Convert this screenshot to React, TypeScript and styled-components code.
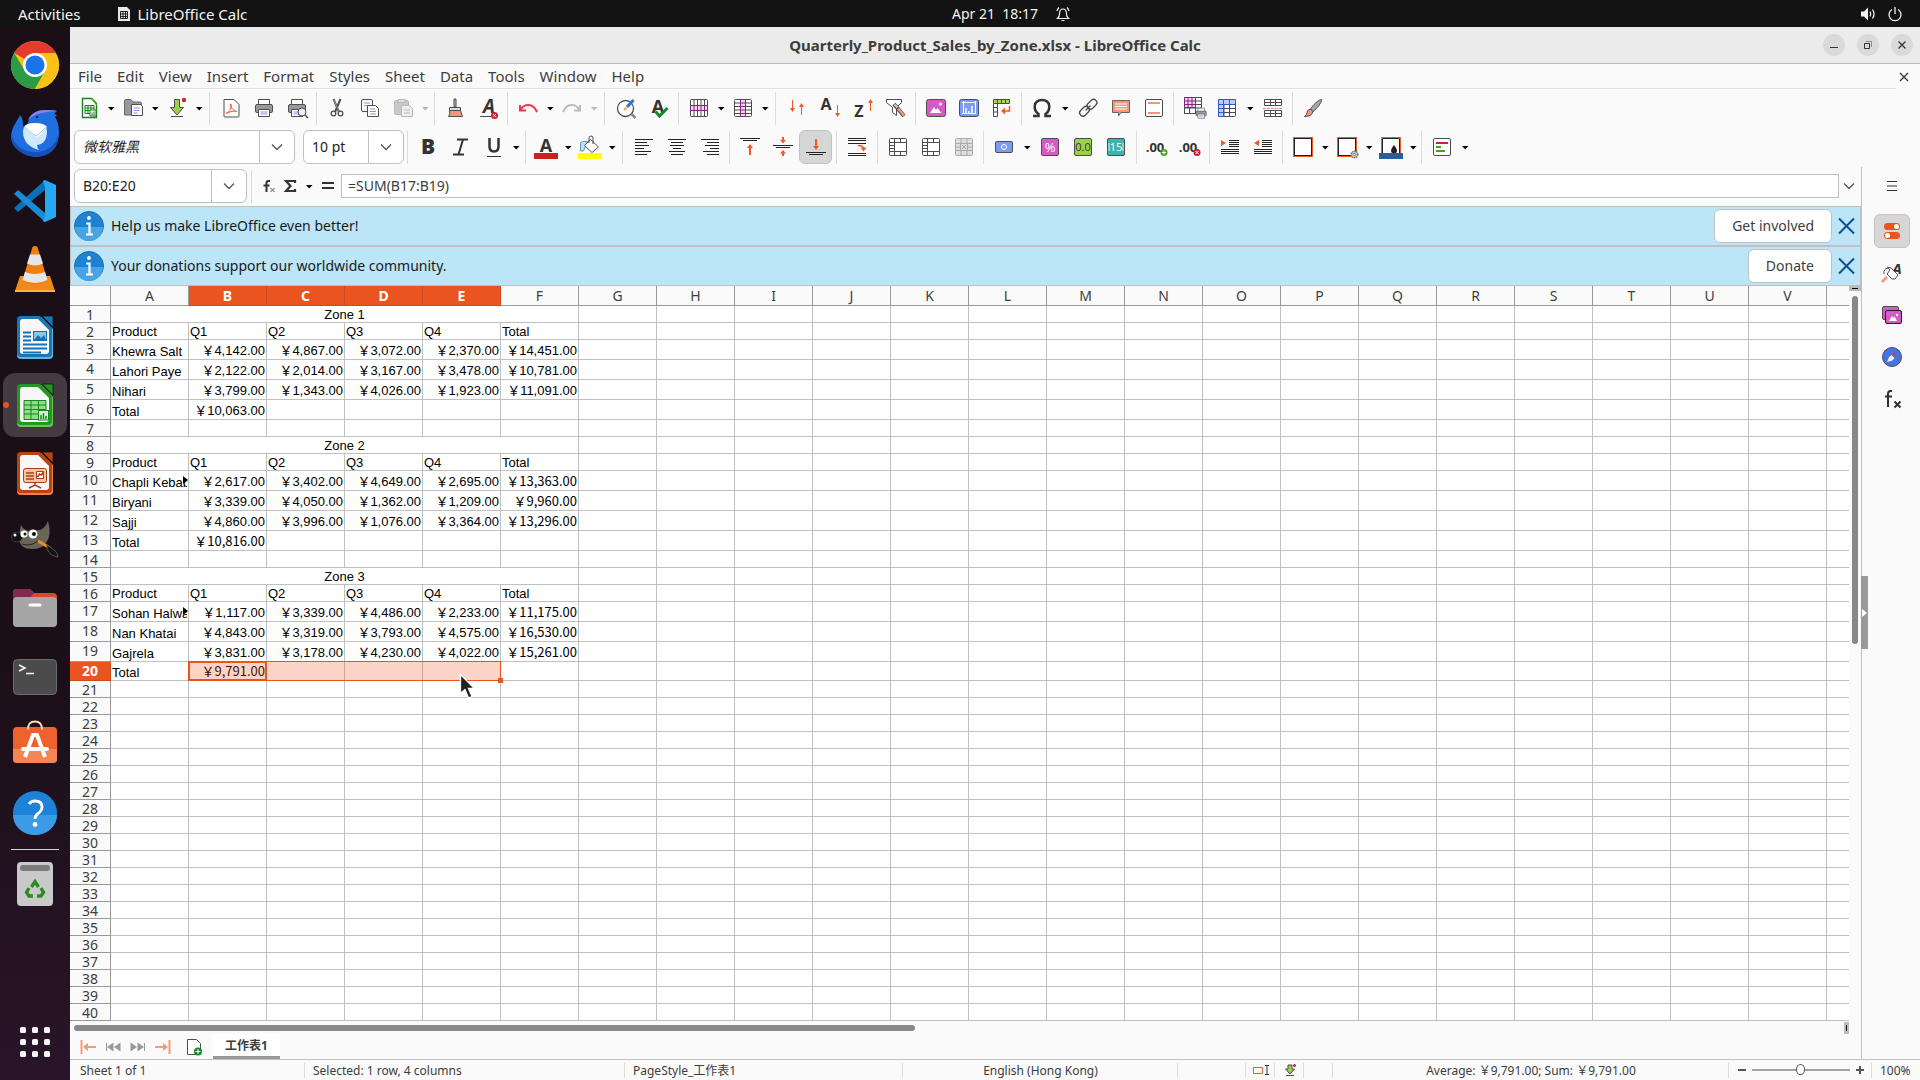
import React from "react";
import styled, { createGlobalStyle, css } from "styled-components";

const ui = `"Noto Sans", "Noto Sans CJK SC", sans-serif`;
const accent = "#e95420";
const line = "#c0c0c0";
const headLine = "#999999";

const Global = createGlobalStyle`
  *, *::before, *::after { box-sizing: border-box; }
  body { margin: 0; overflow: hidden; background: #fafafa; font-family: ${ui}; font-size: 14px; color: #3d3d3d; }
  button, input { font: inherit; color: inherit; margin: 0; padding: 0; border: 0; background: none; }
  svg { display: block; flex: none; overflow: visible; }
`;

const Desktop = styled.div`
  display: flex;
  flex-direction: column;
  height: 100vh;
`;

const TopBar = styled.header`
  display: grid;
  grid-template-columns: 1fr auto 1fr;
  align-items: center;
  height: 27px;
  flex: none;
  background: #131313;
  color: #f2f2f2;
`;
const TopSide = styled.div<{ $end?: boolean }>`
  display: flex;
  align-items: center;
  gap: 8px;
  padding: 0 18px;
  font-size: 15px;
  justify-content: ${(p) => (p.$end ? "flex-end" : "flex-start")};
`;
const TopButton = styled.button`
  display: flex;
  align-items: center;
  gap: 12px;
  line-height: 20px;
  white-space: pre;
`;
const AppButton = styled(TopButton)`
  gap: 7px;
  margin-left: 28px;
`;
const Clock = styled(TopButton)`
  padding-left: 102px;
  gap: 18px;
`;

const Body = styled.div`
  display: flex;
  flex: 1;
  min-height: 0;
`;

const Dock = styled.nav`
  display: flex;
  flex-direction: column;
  align-items: center;
  gap: 4px;
  width: 70px;
  flex: none;
  padding: 6px 0;
  background: linear-gradient(#1b0f17 60%, #29152a);
`;
const DockItem = styled.button<{ $active?: boolean }>`
  display: flex;
  align-items: center;
  justify-content: center;
  position: relative;
  width: 64px;
  height: 64px;
  flex: none;
  border-radius: 12px;
  background: ${(p) => (p.$active ? "#443a41" : "none")};
`;
const RunDot = styled.span`
  position: absolute;
  left: 0;
  top: 29px;
  width: 6px;
  height: 6px;
  border-radius: 3px;
  background: ${accent};
`;
const DockRule = styled.div`
  width: 48px;
  height: 1px;
  flex: none;
  background: #d8d4d6;
`;
const DockSpace = styled.div`
  flex: 1;
`;

const Win = styled.main`
  display: flex;
  flex-direction: column;
  flex: 1;
  min-width: 0;
  background: #fafafa;
`;
const TitleBar = styled.div`
  display: grid;
  grid-template-columns: 1fr auto 1fr;
  align-items: center;
  height: 37px;
  flex: none;
  background: #ebebeb;
  border-bottom: 1px solid #bdbdbd;
`;
const Title = styled.h1`
  grid-column: 2;
  margin: 0;
  font-size: 15px;
  font-weight: 700;
`;
const WinButtons = styled.div`
  display: flex;
  justify-content: flex-end;
  gap: 12px;
  padding-right: 7px;
`;
const WinButton = styled.button`
  display: flex;
  align-items: center;
  justify-content: center;
  width: 22px;
  height: 22px;
  border-radius: 50%;
  background: #dadada;
`;

const MenuRow = styled.div`
  display: flex;
  align-items: stretch;
  height: 25px;
  flex: none;
`;
const MenuBar = styled.nav`
  display: flex;
  flex: 1;
  padding-left: 1px;
  border-bottom: 1px solid #dfdfdf;
`;
const MenuItem = styled.button`
  padding: 0 8px 0 7px;
  font-size: 15px;
  line-height: 24px;
`;
const CloseDoc = styled.button`
  display: flex;
  align-items: center;
  padding: 0 11px 0 3px;
`;

const Toolbar = styled.div<{ $format?: boolean }>`
  display: flex;
  align-items: center;
  height: ${(p) => (p.$format ? 40 : 38)}px;
  flex: none;
  padding-left: ${(p) => (p.$format ? 4 : 2)}px;
`;
const Tool = styled.button<{ $on?: boolean }>`
  display: flex;
  align-items: center;
  justify-content: center;
  width: 33px;
  height: 34px;
  flex: none;
  border-radius: 6px;
  ${(p) => p.$on && css`background: #d6d6d6; border: 1px solid #c2c2c2;`}
`;
const ArrowButton = styled.button<{ $wide?: boolean }>`
  display: flex;
  align-items: center;
  justify-content: center;
  width: ${(p) => (p.$wide ? 13 : 11)}px;
  height: 34px;
  flex: none;
`;
const Divider = styled.span<{ $w: number }>`
  display: flex;
  justify-content: center;
  width: ${(p) => p.$w}px;
  flex: none;
  &::before { content: ""; width: 1px; height: 33px; background: #dcdcdc; }
`;

const Combo = styled.div<{ $w: number; $drop: number }>`
  display: grid;
  grid-template-columns: 1fr ${(p) => p.$drop}px;
  width: ${(p) => p.$w}px;
  height: 34px;
  flex: none;
  background: #fff;
  border: 1px solid ${line};
  border-radius: 6px;
  & + & { margin-left: 8px; }
`;
const ComboInput = styled.input<{ $italic?: boolean }>`
  min-width: 0;
  width: 100%;
  padding: 0 0 2px 8px;
  color: #1c1c1c;
  outline: 0;
  font-style: ${(p) => (p.$italic ? "italic" : "normal")};
`;
const ComboDrop = styled.button`
  display: flex;
  align-items: center;
  justify-content: center;
  border-left: 1px solid ${line};
`;

const Work = styled.div`
  display: flex;
  flex: 1;
  min-height: 0;
`;
const Doc = styled.div`
  display: flex;
  flex-direction: column;
  flex: 1;
  min-width: 0;
`;
const FormulaBar = styled.div`
  display: flex;
  align-items: center;
  height: 39px;
  flex: none;
  padding: 0 0 1px 4px;
`;
const FormulaTools = styled.div`
  display: flex;
  align-items: center;
  width: 86px;
  padding-left: 7px;
`;
const FormulaTool = styled.button<{ $w: number }>`
  display: flex;
  justify-content: center;
  width: ${(p) => p.$w}px;
`;
const FormulaInput = styled.input`
  flex: 1;
  min-width: 0;
  height: 24px;
  padding: 0 0 1px 6px;
  background: #fff;
  border: 1px solid ${line};
  outline: 0;
`;
const Expand = styled.button`
  display: flex;
  justify-content: center;
  width: 22px;
  padding-right: 3px;
`;

const InfoBar = styled.section`
  display: flex;
  align-items: center;
  height: 40px;
  flex: none;
  padding-left: 3px;
  background: #bce5f7;
  border: 1px solid ${line};
  color: #1a1a1a;
`;
const InfoText = styled.p`
  flex: 1;
  margin: 0 0 0 7px;
  padding-bottom: 2px;
`;
const InfoAction = styled.button`
  height: 34px;
  padding: 0 17px 2px;
  background: #fff;
  border: 1px solid ${line};
  border-radius: 6px;
  color: #3d3d3d;
`;
const InfoClose = styled.button`
  display: flex;
  justify-content: center;
  width: 28px;
`;

const SheetArea = styled.div`
  display: flex;
  flex: 1;
  min-height: 0;
`;
const SheetView = styled.div`
  flex: 1;
  min-width: 0;
  overflow: hidden;
  background: #fff;
`;
const Table = styled.table`
  table-layout: fixed;
  width: 1835px;
  border-collapse: separate;
  border-spacing: 0;
`;
const RowCol = styled.col`
  width: 41px;
`;
const DataCol = styled.col`
  width: 78px;
`;
const Head = styled.th<{ $on?: boolean }>`
  height: 20px;
  padding: 0;
  line-height: 18px;
  font-size: 14px;
  font-weight: ${(p) => (p.$on ? 700 : 400)};
  color: ${(p) => (p.$on ? "#fff" : "#3d3d3d")};
  background: ${(p) => (p.$on ? accent : "#fafafa")};
  border-right: 1px solid ${(p) => (p.$on ? "#cc4a1c" : headLine)};
  border-bottom: 1px solid ${(p) => (p.$on ? "#cc4a1c" : headLine)};
`;
const RowHead = styled(Head)<{ $h: number }>`
  height: ${(p) => p.$h}px;
  padding-top: 2px;
  line-height: 14px;
  vertical-align: top;
`;
const Cell = styled.td<{ $align?: "right" | "center"; $cjk?: boolean }>`
  position: relative;
  padding: 0 1px ${(p) => (p.$align === "right" ? (p.$cjk ? 2 : 1) : 0)}px 1px;
  border-right: 1px solid ${line};
  border-bottom: 1px solid ${line};
  vertical-align: bottom;
  text-align: ${(p) => p.$align ?? "left"};
  font-family: ${(p) => (p.$cjk ? `"Noto Sans CJK SC", sans-serif` : `"Liberation Sans", "Noto Sans CJK SC", sans-serif`)};
  font-size: 13px;
  line-height: 15px;
  color: #000;
  white-space: nowrap;
`;
const Clip = styled.div`
  overflow: hidden;
`;
const MoreMark = styled.svg`
  position: absolute;
  right: 0;
  bottom: 6px;
`;
const Selection = styled.div`
  position: absolute;
  z-index: 1;
  left: -1px;
  top: -1px;
  width: 313px;
  height: 20px;
  background: rgba(233, 84, 32, 0.25);
  border: 1px solid ${accent};
  &::before {
    content: "";
    position: absolute;
    left: -1px;
    top: -1px;
    width: 79px;
    height: 20px;
    border: 2px solid ${accent};
  }
  &::after {
    content: "";
    position: absolute;
    right: -3px;
    bottom: -3px;
    width: 5px;
    height: 5px;
    background: ${accent};
  }
`;
const Pointer = styled.svg`
  position: absolute;
  z-index: 2;
  left: 36px;
  top: 11px;
`;

const VScroll = styled.div`
  display: flex;
  flex-direction: column;
  align-items: center;
  width: 12px;
  flex: none;
`;
const SplitV = styled.div`
  display: flex;
  align-items: center;
  justify-content: center;
  width: 12px;
  height: 5px;
  background: #bcbcbc;
  &::before { content: ""; width: 6px; height: 1px; background: #000; }
`;
const VThumb = styled.div`
  width: 6px;
  height: 348px;
  margin-top: 5px;
  border-radius: 3px;
  background: #888;
`;
const HScroll = styled.div`
  display: grid;
  grid-template-columns: 9fr 10fr;
  align-items: center;
  height: 13px;
  flex: none;
  padding: 0 12px 0 4px;
`;
const HThumb = styled.div`
  height: 6px;
  border-radius: 3px;
  background: #888;
`;
const SplitH = styled.div`
  display: flex;
  align-items: center;
  justify-content: center;
  justify-self: end;
  width: 5px;
  height: 12px;
  background: #bcbcbc;
  &::before { content: ""; width: 1px; height: 6px; background: #000; }
`;
const Tabs = styled.div`
  display: flex;
  align-items: center;
  height: 25px;
  flex: none;
  padding-left: 5px;
`;
const TabNav = styled.button<{ $w?: number }>`
  display: flex;
  justify-content: center;
  width: ${(p) => p.$w ?? 25}px;
`;
const Tab = styled.button`
  height: 25px;
  padding: 2px 12px 0;
  background: #fff;
  border-bottom: 3px solid #999;
  font-size: 12px;
  font-weight: 700;
  line-height: 20px;
`;

const Sidebar = styled.aside`
  position: relative;
  display: flex;
  flex-direction: column;
  gap: 8px;
  width: 59px;
  flex: none;
  padding: 2px 0 0 12px;
  border-left: 1px solid ${line};
`;
const SideButton = styled.button<{ $on?: boolean }>`
  display: flex;
  align-items: center;
  justify-content: center;
  width: 36px;
  height: 34px;
  border-radius: 6px;
  ${(p) => p.$on && css`background: #d6d6d6; border: 1px solid #c2c2c2;`}
  &:first-of-type { margin-bottom: 3px; }
`;
const SideHandle = styled.button`
  position: absolute;
  left: -1px;
  top: 409px;
  display: flex;
  align-items: center;
  width: 7px;
  height: 73px;
  background: #999;
`;

const StatusBar = styled.footer`
  display: flex;
  align-items: center;
  height: 21px;
  flex: none;
  border-top: 1px solid ${line};
  font-size: 12px;
`;
const Status = styled.div<{ $w?: number; $center?: boolean }>`
  display: flex;
  align-items: center;
  justify-content: ${(p) => (p.$center ? "center" : "flex-start")};
  ${(p) => (p.$w ? css`width: ${p.$w}px; flex: none;` : css`flex: 1;`)}
  height: 15px;
  padding-left: ${(p) => (p.$center ? 1 : 8)}px;
  gap: 6px;
  white-space: nowrap;
  &:first-child { padding-left: 10px; }
  & + & { border-left: 1px solid #dcdcdc; }
`;
const Range = styled.input`
  appearance: none;
  width: 98px;
  height: 12px;
  &::-webkit-slider-runnable-track {
    height: 2px;
    background: #a0a0a0;
  }
  &::-webkit-slider-thumb {
    appearance: none;
    width: 9px;
    height: 11px;
    margin-top: -5px;
    border: 1px solid #555;
    border-radius: 50%;
    background: #fff;
  }
`;
const ZoomLabel = styled.label`
  display: flex;
`;
const Hidden = styled.span`
  position: absolute;
  width: 1px;
  height: 1px;
  overflow: hidden;
  clip-path: inset(50%);
`;

/* ---------- drawings ---------- */

const Svg = ({ s = 24, w, h, children }: { s?: number; w?: number; h?: number; children: React.ReactNode }) => (
  <svg width={w ?? s} height={h ?? s} viewBox={`0 0 ${w ?? s} ${h ?? s}`} fill="none" aria-hidden="true">
    {children}
  </svg>
);
const G = "#4d4d4d";
const R = "#ed5b27";

const Arrow = ({ dim }: { dim?: boolean }) => (
  <Svg w={8} h={6}>
    <path d="M1 2h6.500L4.200 5.500z" fill={dim ? "#b8b8b8" : "#000"} />
  </Svg>
);
const Chevron = () => (
  <Svg w={12} h={8}>
    <path d="M1 1.500l5 5 5-5" stroke="#555" strokeWidth="1.300" />
  </Svg>
);
const Letter = ({ t, x = 12, y = 18, size = 18, italic, fill = "#333", weight = 700 }: { t: string; x?: number; y?: number; size?: number; italic?: boolean; fill?: string; weight?: number }) => (
  <text x={x} y={y} textAnchor="middle" fontFamily="Open Sans, sans-serif" fontWeight={weight} fontSize={size} fontStyle={italic ? "italic" : "normal"} fill={fill}>
    {t}
  </text>
);
const Printer = ({ x = 0, y = 0, k = 1 }: { x?: number; y?: number; k?: number }) => (
  <g transform={`translate(${x} ${y}) scale(${k})`}>
    <path d="M6.500 9V3.500h11V9" fill="#fff" stroke={G} />
    <rect x="3.500" y="8.500" width="17" height="8" rx="1.500" fill="#999" stroke={G} />
    <path d="M6.500 13.500h11v7h-11z" fill="#fff" stroke={G} />
    <path d="M8.500 16h7M8.500 18h7" stroke="#8d8df0" />
  </g>
);
const MergeGrid = () => (
  <Svg>
    <rect x="3.500" y="3.500" width="17" height="17" rx="1" fill="#fff" stroke={G} />
    <path d="M8.500 3.500v17M8.500 7.500h12M8.500 16.500h12M3.500 7.500h5M3.500 10.500h5M3.500 13.500h5M3.500 16.500h5M14.500 3.500v4M14.500 16.500v4" stroke={G} />
  </Svg>
);

const icons: Record<string, React.ReactNode> = {
  new: (
    <Svg>
      <path d="M5.500 2.500h9l5 5v14h-14z" fill="#fff" stroke="#18811c" strokeWidth="1.400" />
      <path d="M13.500 2h1.500l5 5v2h-1z" fill="#43a31f" />
      <path d="M8 9.500h9v8H8zM8 12h9M8 14.500h9M11 9.500v8M14 9.500v8" stroke="#18811c" />
      <path d="M13 14h6v6h-6z" fill="#fff" stroke="#18811c" />
      <path d="M15 19.500v-3M17 19.500v-4" stroke="#18811c" />
    </Svg>
  ),
  open: (
    <Svg>
      <path d="M3.500 19V5q0-1.500 1.500-1.500h5l2 2.500h7q1.500 0 1.500 1.500V19z" fill="#999" stroke="#666" />
      <path d="M10.500 8.500h9l2 2v9h-11z" fill="#fff" stroke={G} />
      <path d="M12.500 12h6M12.500 14.500h6M12.500 17h4" stroke="#8d8df0" />
    </Svg>
  ),
  save: (
    <Svg>
      <path d="M9.500 3.500h5v8h4L12 19l-6.500-7.500h4z" fill="#9bd14a" stroke={G} />
      <path d="M6 20.500h12" stroke={G} />
      <circle cx="19" cy="4" r="2.200" fill="#c9213a" />
    </Svg>
  ),
  pdf: (
    <Svg>
      <path d="M5 3.500h10l5 5V20q0 1-1 1H6q-1 0-1-1V4z" fill="#fff" stroke={G} />
      <path d="M7 17.500c4-2 6-6 5-9.500-1.500-1-1 5 5.500 7.500-2-1-6.500 0-10.500 2z" stroke="#f0503c" />
    </Svg>
  ),
  print: <Svg><Printer /></Svg>,
  preview: (
    <Svg>
      <Printer />
      <circle cx="17" cy="16" r="4" fill="#eef" stroke={G} />
      <path d="M20 19l3 3" stroke={G} strokeWidth="1.500" />
    </Svg>
  ),
  cut: (
    <Svg>
      <path d="M8.500 3l5.500 13M15.500 3L10 16" stroke={G} strokeWidth="2" />
      <path d="M8.800 4l5 11" stroke="#bbb" strokeWidth=".7" />
      <circle cx="8.500" cy="17.500" r="2.300" stroke={G} strokeWidth="1.300" />
      <circle cx="15.500" cy="17.500" r="2.300" stroke={G} strokeWidth="1.300" />
    </Svg>
  ),
  copy: (
    <Svg>
      <rect x="3.500" y="3.500" width="11" height="12" rx="1.500" fill="#fff" stroke={G} />
      <path d="M6 7h6M6 9.500h3" stroke="#8d8df0" />
      <path d="M9.500 9.500h8l3 3v8h-11z" fill="#fff" stroke={G} />
      <path d="M12 13h5M12 15.500h6M12 18h6" stroke="#8d8df0" />
    </Svg>
  ),
  paste: (
    <Svg>
      <rect x="3.500" y="4.500" width="14" height="14" rx="1.500" fill="#c8c8c8" stroke="#b8b8b8" />
      <path d="M7 3.500h7v3H7z" fill="#ddd" stroke="#b8b8b8" />
      <path d="M10.500 9.500h8l3 3v8h-11z" fill="#eee" stroke="#b8b8b8" />
      <path d="M13 14h6M13 17h6" stroke="#bbb" />
    </Svg>
  ),
  clone: (
    <Svg>
      <path d="M11 3h2v8h-2z" fill="#bbb" stroke={G} />
      <path d="M6.500 11.500h11v3h-11z" fill="#ddd" stroke={G} />
      <path d="M6.500 14.500h11l2 6h-14q2-2 1-6z" fill="#f7937e" stroke={G} />
    </Svg>
  ),
  clear: (
    <Svg>
      <Letter t="A" x={13} y={17} size={19} italic />
      <path d="M4 20.500h12" stroke={G} />
      <circle cx="18.500" cy="19.500" r="3.500" fill="#c9213a" />
      <path d="M17 18l3 3m0-3l-3 3" stroke="#fff" />
    </Svg>
  ),
  undo: (
    <Svg>
      <path d="M4 9v5.500h6M4.500 14C8 7.500 17 6.500 21 16" stroke="#e83a50" strokeWidth="2" />
    </Svg>
  ),
  redo: (
    <Svg>
      <path d="M20 9v5.500h-6M19.500 14C16 7.500 7 6.500 3 16" stroke="#bcbcbc" strokeWidth="2" />
    </Svg>
  ),
  find: (
    <Svg>
      <circle cx="11.500" cy="12.500" r="8" fill="#fff" stroke={G} strokeWidth="1.300" />
      <path d="M17.500 18l4 4" stroke="#888" strokeWidth="2.500" />
      <path d="M13 11l6.500-7" stroke="#2f6fde" strokeWidth="3" />
      <path d="M10 14l2.500-2.500" stroke="#f0a04b" strokeWidth="2" />
    </Svg>
  ),
  spell: (
    <Svg>
      <Letter t="A" x={11} y={17} size={18} />
      <path d="M8.500 15.500l4 4.500 8-8" stroke="#15882a" strokeWidth="3" />
    </Svg>
  ),
  rows: (
    <Svg>
      <rect x="3.500" y="3.500" width="17" height="17" rx="1" fill="#fff" stroke={G} />
      <path d="M7 3.500v17M10.500 3.500v17M14 3.500v17M17.500 3.500v17" stroke={G} />
      <path d="M3.500 9.500h17v5h-17z" fill="#f3d5f1" stroke="#83257c" />
      <path d="M7 9.500v5M10.500 9.500v5M14 9.500v5M17.500 9.500v5" stroke="#83257c" />
    </Svg>
  ),
  cols: (
    <Svg>
      <rect x="3.500" y="3.500" width="17" height="17" rx="1" fill="#fff" stroke={G} />
      <path d="M3.500 7h17M3.500 10.500h17M3.500 14h17M3.500 17.500h17" stroke={G} />
      <path d="M9.500 3.500h5v17h-5z" fill="#f3d5f1" stroke="#83257c" />
      <path d="M9.500 7h5M9.500 10.500h5M9.500 14h5M9.500 17.500h5" stroke="#83257c" />
    </Svg>
  ),
  sort: (
    <Svg>
      <path d="M7.500 4v10M16.500 8v11" stroke={R} />
      <path d="M5 12h5l-2.500 4zM14 11h5l-2.500-4z" fill={R} />
    </Svg>
  ),
  asc: (
    <Svg>
      <Letter t="A" x={8} y={14} size={16} />
      <path d="M19.500 9v9" stroke={R} />
      <path d="M17 17h5l-2.500 4z" fill={R} />
    </Svg>
  ),
  desc: (
    <Svg>
      <Letter t="Z" x={8} y={21} size={16} />
      <path d="M19.500 6v9" stroke={R} />
      <path d="M17 7h5l-2.500-4z" fill={R} />
    </Svg>
  ),
  filter: (
    <Svg>
      <path d="M2.500 3.500h15v3l-5 5v8l-4-3v-5l-6-5z" fill="#fff" stroke={G} />
      <path d="M10 8l10 12" stroke={G} strokeWidth="4" />
      <path d="M10.500 8.500l3 3" stroke="#ccc" strokeWidth="2" />
      <path d="M14 12.500l6 7" stroke="#f7937e" strokeWidth="2.500" />
    </Svg>
  ),
  image: (
    <Svg>
      <rect x="2.500" y="3.500" width="19" height="17" rx="2" fill="#d65ac8" stroke={G} />
      <path d="M6 17l4-6 2 3 1.500-2 4 5z" fill="#fff" />
      <circle cx="16.500" cy="8" r="1.500" fill="#fff" />
    </Svg>
  ),
  chart: (
    <Svg>
      <rect x="2.500" y="3.500" width="19" height="17" rx="2" fill="#7a9cf5" stroke={G} />
      <path d="M6.500 5v13M5 17.500h14M5 6.500h14M18.500 5v13" stroke="#fff" />
      <path d="M9 17v-5M12 17v-2M15 17v-7" stroke="#fff" strokeWidth="1.500" />
    </Svg>
  ),
  pivot: (
    <Svg>
      <path d="M3.500 3.500h16v4h-16z" fill="#a3d65c" stroke={G} />
      <path d="M7.500 3.500v4M11.500 3.500v4M15.500 3.500v4M3.500 7.500v13h4v-13M3.500 11.500h4M3.500 16h4" stroke={G} />
      <path d="M19.500 10v5h-6" stroke={R} strokeWidth="1.500" />
      <path d="M15 11.500v7l-4-3.500z" fill={R} />
    </Svg>
  ),
  omega: (
    <Svg>
      <path d="M3 20h5.500v-2C3 14.500 3 4 12 4s9 10.500 3.500 14v2H21" stroke="#333" strokeWidth="2.500" />
    </Svg>
  ),
  link: (
    <Svg>
      <rect x="10.500" y="5" width="11" height="6.500" rx="3.200" transform="rotate(-45 16 8.250)" stroke={G} strokeWidth="1.300" />
      <rect x="3" y="12" width="11" height="6.500" rx="3.200" transform="rotate(-45 8.500 15.250)" stroke={G} strokeWidth="1.300" />
      <path d="M9.500 14.500l5-5" stroke={G} strokeWidth="1.300" />
    </Svg>
  ),
  comment: (
    <Svg>
      <path d="M3.500 4.500h17v12H12L9.500 20v-3.500h-6z" fill="#f7937e" stroke="#665" />
      <path d="M6 8h12M6 10.500h12M6 13h12" stroke="#fff" />
    </Svg>
  ),
  header: (
    <Svg>
      <rect x="3.500" y="3.500" width="17" height="17" rx="1.500" fill="#fff" stroke={G} />
      <path d="M6 7h12M6 17h12" stroke="#f7937e" strokeWidth="2" />
    </Svg>
  ),
  area: (
    <Svg w={26} h={26}>
      <rect x="3.500" y="2.500" width="17" height="16" fill="#fff" stroke={G} />
      <path d="M3.500 6h17M3.500 9.500h17M3.500 13h17M8.500 2.500v16M14.500 2.500v16" stroke={G} />
      <path d="M3.500 2.500h11v10h-11zM3.500 6h11M3.500 9.500h11M7 2.500v10M11 2.500v10" fill="#f3d5f1" stroke="#83257c" />
      <Printer x={13} y={11} k={0.6} />
    </Svg>
  ),
  freeze: (
    <Svg>
      <rect x="3.500" y="3.500" width="17" height="17" rx="1" fill="#fff" stroke={G} />
      <path d="M3.500 3.500h17v5h-12v12h-5z" fill="#b9cdf8" />
      <path d="M9 8.500v12M14.500 8.500v12M9 12.500h11.500M9 16.500h11.500" stroke={G} />
      <path d="M3.500 8.500h17M8.500 3.500v17M3.500 3.500h17v5M3.500 3.500v17h5M3.500 12.500h5M3.500 16.500h5M14.500 3.500v5" stroke="#2a5bd0" />
    </Svg>
  ),
  split: (
    <Svg>
      <path d="M3.500 3.500h17v6h-17zM3.500 6.500h17M9.500 3.500v6M14.500 3.500v6M3.500 14.500h17v6h-17zM3.500 17.500h17M9.500 14.500v6M14.500 14.500v6" fill="#fff" stroke={G} />
      <path d="M2 12.500h20" stroke="#f27ad0" strokeDasharray="3 1" />
    </Svg>
  ),
  draw: (
    <Svg>
      <path d="M9.500 13C12 9 17 4 20.500 3.500 20.500 7 16 12.500 12 15.500z" fill="#a8a8a8" stroke={G} />
      <path d="M9.500 13l2.500 2.500q-1 5-8.500 5 2.500-1.500 2.500-4t3.500-3.500z" fill="#f7937e" stroke={G} />
    </Svg>
  ),
  bold: <Svg><Letter t="B" y={19} size={21} weight={800} /></Svg>,
  italic: (
    <Svg>
      <path d="M8 4.500h11M4 19.500h11M14 4.500L9.500 19.500" stroke="#333" strokeWidth="2" />
    </Svg>
  ),
  underline: (
    <Svg>
      <path d="M7.500 3v8.500q0 5 4.500 5t4.500-5V3" stroke="#333" strokeWidth="2.500" />
      <path d="M5 21.500h14" stroke="#333" />
    </Svg>
  ),
  color: (
    <Svg>
      <Letter t="A" y={17} size={18} />
      <path d="M0 18h24v6H0z" fill="#c9211e" />
    </Svg>
  ),
  bucket: (
    <Svg>
      <path d="M2.500 16V8.500q0-2 3-2h4l-4 9.500z" fill="#b7e2f7" stroke="#4a7d9d" strokeWidth=".8" />
      <path d="M12.500 4.500l8 7.500-6.500 5.500-7.500-7z" fill="#fff" stroke={G} />
      <path d="M11 8V3q0-2 2-2t2 2v6" stroke={G} />
      <path d="M0 18h24v6H0z" fill="#ff0" />
    </Svg>
  ),
  left: <Svg><path d="M3 4.500h18M3 7.500h12M3 10.500h14M3 13.500h9M3 16.500h16M3 19.500h12" stroke="#222" /></Svg>,
  center: <Svg><path d="M3 4.500h18M6 7.500h12M5 10.500h14M8 13.500h8M4 16.500h16M6 19.500h12" stroke="#222" /></Svg>,
  right: <Svg><path d="M3 4.500h18M9 7.500h12M7 10.500h14M12 13.500h9M5 16.500h16M9 19.500h12" stroke="#222" /></Svg>,
  top: (
    <Svg>
      <path d="M2 3.500h20M5 5.500h14" stroke="#222" />
      <path d="M12 20v-8" stroke={R} strokeWidth="2" />
      <path d="M9 13h6l-3-4z" fill={R} />
    </Svg>
  ),
  middle: (
    <Svg>
      <path d="M2 10.500h20M5 12.500h14" stroke="#222" />
      <path d="M12 2v3M12 21v-3" stroke={R} strokeWidth="2" />
      <path d="M9 5h6l-3 3.500zM9 18.500h6L12 15z" fill={R} />
    </Svg>
  ),
  bottom: (
    <Svg>
      <path d="M2 17.500h20M5 19.500h14" stroke="#222" />
      <path d="M12 4v7" stroke={R} strokeWidth="2" />
      <path d="M9 11h6l-3 4z" fill={R} />
    </Svg>
  ),
  wrap: (
    <Svg>
      <path d="M3 3.500h18M3 5.500h18M3 8.500h18M3 18.500h18M3 20.500h18" stroke="#222" />
      <path d="M13 10.500q5 0 5.500 3" stroke={R} strokeWidth="1.500" />
      <path d="M15.500 12.500h6l-3 4z" fill={R} />
    </Svg>
  ),
  mergeA: <MergeGrid />,
  mergeB: <MergeGrid />,
  unmerge: (
    <Svg>
      <rect x="3.500" y="3.500" width="17" height="17" rx="1" fill="#ddd" stroke="#aaa" />
      <path d="M3.500 8.500h17M3.500 15.500h17M9 3.500v5M15 3.500v5M9 15.500v5M15 15.500v5M8.500 8.500v7M15.500 8.500v7M3.500 12h5M15.500 12h5M10 10l4 4M14 10l-4 4" stroke="#aaa" />
    </Svg>
  ),
  currency: (
    <Svg>
      <rect x="3.500" y="6.500" width="17" height="11" rx="1.500" fill="#7a9cf5" stroke={G} />
      <circle cx="12" cy="12" r="2.500" stroke="#fff" />
    </Svg>
  ),
  percent: (
    <Svg>
      <rect x="3.500" y="3.500" width="17" height="17" rx="1.500" fill="#d65ac8" stroke={G} />
      <Letter t="%" y={17} size={13} fill="#fff" weight={400} />
    </Svg>
  ),
  number: (
    <Svg>
      <rect x="3.500" y="3.500" width="17" height="17" rx="1.500" fill="#9bd14a" stroke={G} />
      <Letter t="0.0" y={16} size={11} weight={400} />
    </Svg>
  ),
  date: (
    <Svg>
      <rect x="3.500" y="3.500" width="17" height="17" rx="1.500" fill="#41b3a8" stroke={G} />
      <Letter t="15" y={16} size={11} fill="#fff" weight={400} />
      <path d="M5 8v8M19 8v8" stroke="#fff" strokeWidth=".8" />
    </Svg>
  ),
  addDec: (
    <Svg>
      <Letter t=".00" x={10} y={17} size={13} />
      <circle cx="19" cy="17.500" r="3.500" fill="#43a31f" />
      <path d="M17 17.500h4M19 15.500v4" stroke="#fff" />
    </Svg>
  ),
  delDec: (
    <Svg>
      <Letter t=".00" x={10} y={17} size={13} />
      <circle cx="19" cy="17.500" r="3.500" fill="#c9213a" />
      <path d="M17.500 16l3 3m0-3l-3 3" stroke="#fff" />
    </Svg>
  ),
  indent: (
    <Svg>
      <path d="M11 5.500h10M11 7.500h10M11 9.500h10M11 11.500h10M3 14.500h18M3 16.500h18M3 18.500h18" stroke="#222" />
      <path d="M3 5v6l5-3z" fill={R} />
    </Svg>
  ),
  outdent: (
    <Svg>
      <path d="M11 5.500h10M11 7.500h10M11 9.500h10M11 11.500h10M3 14.500h18M3 16.500h18M3 18.500h18" stroke="#222" />
      <path d="M8 5v6L3 8z" fill={R} />
    </Svg>
  ),
  borders: (
    <Svg>
      <rect x="2.500" y="2.500" width="19" height="19" stroke={R} />
      <rect x="3.500" y="3.500" width="17" height="17" fill="#fff" stroke="#222" />
    </Svg>
  ),
  borderStyle: (
    <Svg>
      <rect x="2.500" y="2.500" width="19" height="19" stroke={R} />
      <rect x="3.500" y="3.500" width="17" height="17" fill="#fff" stroke="#222" />
      <circle cx="19.500" cy="19.500" r="3.300" fill="#ccc" stroke="#777" strokeWidth="1.500" strokeDasharray="1.500 .6" />
      <circle cx="19.500" cy="19.500" r="1.200" fill="#fff" stroke="#777" />
    </Svg>
  ),
  borderColor: (
    <Svg>
      <path d="M2.500 18V2.500h19V18" stroke={R} />
      <path d="M3.500 18V3.500h17V18" fill="#fff" stroke="#222" />
      <path d="M15 10q3 4 3 5.500a3 3 0 01-6 0Q12 14 15 10z" fill="#222" />
      <path d="M0 18h24v6H0z" fill="#2a6099" />
    </Svg>
  ),
  conditional: (
    <Svg>
      <rect x="3.500" y="3.500" width="17" height="17" rx="1.500" fill="#fff" stroke={G} />
      <path d="M6 8h12" stroke="#c9213a" strokeWidth="2" />
      <path d="M6 12h5M6 16h9" stroke="#43a31f" strokeWidth="2" />
    </Svg>
  ),
};

type Item = { icon: string; label: string; arrow?: "tight" | "wide"; dim?: boolean; on?: boolean } | { sep: number };

const standard: Item[] = [
  { icon: "new", label: "New", arrow: "tight" },
  { icon: "open", label: "Open", arrow: "tight" },
  { icon: "save", label: "Save", arrow: "tight" },
  { sep: 10 },
  { icon: "pdf", label: "Export as PDF" },
  { icon: "print", label: "Print" },
  { icon: "preview", label: "Print preview" },
  { sep: 7 },
  { icon: "cut", label: "Cut" },
  { icon: "copy", label: "Copy" },
  { icon: "paste", label: "Paste", arrow: "tight", dim: true },
  { sep: 8 },
  { icon: "clone", label: "Clone formatting" },
  { icon: "clear", label: "Clear formatting" },
  { sep: 7 },
  { icon: "undo", label: "Undo", arrow: "tight" },
  { icon: "redo", label: "Redo", arrow: "tight", dim: true },
  { sep: 10 },
  { icon: "find", label: "Find and replace" },
  { icon: "spell", label: "Spelling" },
  { sep: 7 },
  { icon: "rows", label: "Row", arrow: "tight" },
  { icon: "cols", label: "Column", arrow: "tight" },
  { sep: 10 },
  { icon: "sort", label: "Sort" },
  { icon: "asc", label: "Sort ascending" },
  { icon: "desc", label: "Sort descending" },
  { icon: "filter", label: "AutoFilter" },
  { sep: 7 },
  { icon: "image", label: "Insert image" },
  { icon: "chart", label: "Insert chart" },
  { icon: "pivot", label: "Pivot table" },
  { sep: 7 },
  { icon: "omega", label: "Special character", arrow: "wide" },
  { icon: "link", label: "Hyperlink" },
  { icon: "comment", label: "Comment" },
  { icon: "header", label: "Headers and footers" },
  { sep: 7 },
  { icon: "area", label: "Define print area" },
  { icon: "freeze", label: "Freeze rows and columns", arrow: "wide" },
  { icon: "split", label: "Split window" },
  { sep: 7 },
  { icon: "draw", label: "Show draw functions" },
];

const formatting: Item[] = [
  { sep: 7 },
  { icon: "bold", label: "Bold" },
  { icon: "italic", label: "Italic" },
  { icon: "underline", label: "Underline", arrow: "tight" },
  { sep: 8 },
  { icon: "color", label: "Font colour", arrow: "tight" },
  { icon: "bucket", label: "Highlighting colour", arrow: "tight" },
  { sep: 10 },
  { icon: "left", label: "Align left" },
  { icon: "center", label: "Align centre" },
  { icon: "right", label: "Align right" },
  { sep: 7 },
  { icon: "top", label: "Align top" },
  { icon: "middle", label: "Centre vertically" },
  { icon: "bottom", label: "Align bottom", on: true },
  { sep: 8 },
  { icon: "wrap", label: "Wrap text" },
  { sep: 8 },
  { icon: "mergeA", label: "Merge and centre" },
  { icon: "mergeB", label: "Merge cells" },
  { icon: "unmerge", label: "Unmerge cells" },
  { sep: 7 },
  { icon: "currency", label: "Format as currency", arrow: "wide" },
  { icon: "percent", label: "Format as percent" },
  { icon: "number", label: "Format as number" },
  { icon: "date", label: "Format as date" },
  { sep: 8 },
  { icon: "addDec", label: "Add decimal place" },
  { icon: "delDec", label: "Delete decimal place" },
  { sep: 7 },
  { icon: "indent", label: "Increase indent" },
  { icon: "outdent", label: "Decrease indent" },
  { sep: 7 },
  { icon: "borders", label: "Borders", arrow: "tight" },
  { icon: "borderStyle", label: "Border style", arrow: "tight" },
  { icon: "borderColor", label: "Border colour", arrow: "tight" },
  { sep: 7 },
  { icon: "conditional", label: "Conditional formatting", arrow: "wide" },
];

const Tools = ({ items }: { items: Item[] }) => (
  <>
    {items.map((it, i) =>
      "sep" in it ? (
        <Divider key={i} $w={it.sep} />
      ) : (
        <React.Fragment key={i}>
          <Tool aria-label={it.label} $on={it.on}>{icons[it.icon]}</Tool>
          {it.arrow && (
            <ArrowButton aria-label={`${it.label} options`} $wide={it.arrow === "wide"}>
              <Arrow dim={it.dim} />
            </ArrowButton>
          )}
        </React.Fragment>
      )
    )}
  </>
);

const LibreDoc = ({ c, c2, children }: { c: string; c2: string; children: React.ReactNode }) => (
  <Svg s={48}>
    <path d="M10 4h20l12 12v26q0 4-4 4H10q-4 0-4-4V8q0-4 4-4z" fill={c2} />
    <path d="M10 3h19l12 12v25q0 4-4 4H10q-4 0-4-4V7q0-4 4-4z" fill={c} />
    <path d="M12 6h15l11 11v21q0 3-3 3H12q-3 0-3-3V9q0-3 3-3z" fill="#f7f7f7" />
    <path d="M31 3h11v11z" fill={c} stroke="#1b0f17" strokeWidth=".8" />
    {children}
  </Svg>
);

const dock: { label: string; active?: boolean; art: React.ReactNode }[] = [
  {
    label: "Google Chrome",
    art: (
      <Svg s={48}>
        <circle cx="24" cy="24" r="24" fill="#fbc116" />
        <path d="M24 24L3.200 12A24 24 0 0144.800 12z" fill="#e33b2e" />
        <path d="M3.200 12A24 24 0 0024 48l10-18-20 0z" fill="#2b9b47" />
        <path d="M24 12h20.800A24 24 0 0124 48l10.400-18z" fill="#fbc116" />
        <circle cx="24" cy="24" r="12" fill="#fff" />
        <circle cx="24" cy="24" r="9.500" fill="#1a73e8" />
      </Svg>
    ),
  },
  {
    label: "Thunderbird",
    art: (
      <Svg s={48}>
        <path d="M0 27C1 17 6 13 9 6c3 4 3 7 3 11l4 2C17 8 22 1 34 1c5 0 9 0 12 1l-3 3 3 1-2 2c3 5 4 9 4 16 0 14-10 23-23 23S0 39 0 27z" fill="#1f6fe0" />
        <path d="M17 11C20 4 27 1 34 1c5 0 9 0 12 1-11 1-20 1-29 9z" fill="#8f7ff0" />
        <path d="M0 25c4 13 14 19 27 18 10-1 18-8 20-16 1 12-9 21-22 21S0 38 0 25z" fill="#1450b8" />
        <path d="M12 22q0-7 12-7t12 7q0 13-10 14 0 3 2 5-16-4-16-19z" fill="#cfe9fb" />
        <path d="M13 18l11 9q2 1 4 0l8-9q-3-4-12-4t-11 4z" fill="#fff" />
        <path d="M14 18l9 8q2 1 4 0l8-8" stroke="#a8cdec" />
        <circle cx="26" cy="8" r="1.300" fill="#0b2a6b" />
      </Svg>
    ),
  },
  {
    label: "Visual Studio Code",
    art: (
      <Svg s={48}>
        <path d="M3 31l4 4 27-22V3z" fill="#0a6fb8" />
        <path d="M3 17l4-4 27 23v9z" fill="#1a8ad6" />
        <path d="M34 3l11 5v32l-11 5q-1 0-2-1l2-5V10l-2-6z" fill="#27a9f2" />
      </Svg>
    ),
  },
  {
    label: "VLC media player",
    art: (
      <Svg s={48}>
        <path d="M9 31h30l5 15H4z" fill="#f08a1c" />
        <path d="M4 45h40v2H4z" fill="#ffb13d" />
        <path d="M21.500 2q2.500-2 5 0L37 37q-13 6-26 0z" fill="#f07f13" />
        <path d="M19 9.500h10l3 9q-8 4-16 0z" fill="#e4e6e8" />
        <path d="M14 27q10 4 20 0l2.500 8q-12 6-25 0z" fill="#e4e6e8" />
      </Svg>
    ),
  },
  {
    label: "LibreOffice Writer",
    art: (
      <LibreDoc c="#1a77b5" c2="#63b4e0">
        <path d="M12 19.500h8M12 23.500h8M12 27.500h8M12 31.500h24M12 35.500h24M12 39.500h18" stroke="#1272b3" strokeWidth="2" />
        <rect x="22.500" y="18.500" width="13" height="9" fill="#8cc6ec" stroke="#1272b3" />
        <path d="M23 27l4-5 3 3 3-3 2 5z" fill="#1272b3" />
      </LibreDoc>
    ),
  },
  {
    label: "LibreOffice Calc",
    active: true,
    art: (
      <LibreDoc c="#1f9a1c" c2="#6cc85b">
        <path d="M13 19.500h22v19H13zM13 24h22M13 28.500h22M13 33h22M20 19.500v19M27.500 19.500v19" fill="#8fdc8a" stroke="#17881a" />
        <rect x="27.500" y="29.500" width="10" height="9.500" fill="#d3f2cf" stroke="#17881a" />
        <path d="M30 38v-4M32.500 38v-6M35 38v-3" stroke="#17881a" strokeWidth="1.500" />
      </LibreDoc>
    ),
  },
  {
    label: "LibreOffice Impress",
    art: (
      <LibreDoc c="#b8440f" c2="#ee8350">
        <rect x="12.500" y="19.500" width="23" height="14" rx="2" fill="#f6c4a5" stroke="#a8400f" />
        <path d="M15 24h8M15 27h8M15 30h8" stroke="#a8400f" strokeWidth="1.500" />
        <path d="M25.500 22.500h7v7h-7z" fill="#fff" stroke="#a8400f" />
        <path d="M26.500 28l2-3 2 1 2-3M24 34v3M18 39l6-3 6 3" stroke="#a8400f" strokeWidth="1.500" />
      </LibreDoc>
    ),
  },
  {
    label: "GIMP",
    art: (
      <Svg s={48}>
        <path d="M10 8q4 8 13 5 10 2 14-9 4 14-2 22-4 6-14 6-12 0-13-10 0-5 2-14z" fill="#6b6458" />
        <ellipse cx="6" cy="20" rx="5.500" ry="5" fill="#111" stroke="#555" strokeWidth=".6" />
        <circle cx="4" cy="18" r="1.500" fill="#fff" />
        <circle cx="13" cy="17" r="3.600" fill="#fff" />
        <circle cx="22" cy="17" r="4.500" fill="#fff" />
        <circle cx="14" cy="17" r="1.500" fill="#111" />
        <circle cx="23" cy="17" r="2" fill="#111" />
        <path d="M11 27q8 3 16-3" stroke="#222" />
        <path d="M27 24l12 7" stroke="#e8902c" strokeWidth="3" />
        <path d="M36 28l6 4q5 3 5 8-8-1-11-8z" fill="#151515" stroke="#555" />
      </Svg>
    ),
  },
  {
    label: "Files",
    art: (
      <Svg s={48}>
        <path d="M2 18V8q0-4 4-4h13l4 4h19q4 0 4 4v8z" fill="#d8482a" />
        <path d="M2 18V8q0-4 4-4h13l4 4-8 10z" fill="#7e2a52" />
        <rect x="2" y="12" width="44" height="30" rx="4" fill="#a6a6a6" />
        <path d="M19 20h10" stroke="#fff" strokeWidth="3" strokeLinecap="round" />
      </Svg>
    ),
  },
  {
    label: "Terminal",
    art: (
      <Svg s={48}>
        <rect x="2.500" y="6.500" width="43" height="35" rx="4" fill="#4b4b4b" stroke="#6d6d6d" />
        <path d="M8 12l6 3-6 3M15 20.500h8" stroke="#f5f5f5" strokeWidth="1.500" />
      </Svg>
    ),
  },
  {
    label: "Ubuntu Software",
    art: (
      <Svg s={48}>
        <rect x="2" y="6" width="44" height="36" rx="4" fill="#f0622d" />
        <path d="M2 28h44v10q0 4-4 4H6q-4 0-4-4z" fill="#f38556" />
        <path d="M17 8.500q0-8 7-8t7 8" stroke="#f7ddb8" strokeWidth="1.800" />
        <path d="M14 36l8-22h4l8 22" stroke="#fff" strokeWidth="4" />
        <path d="M12 28h24" stroke="#fff" strokeWidth="4" strokeLinecap="round" />
      </Svg>
    ),
  },
  {
    label: "Help",
    art: (
      <Svg s={48}>
        <circle cx="24" cy="24" r="22" fill="#1d82d8" />
        <path d="M2 26h44a22 20 0 01-44 0z" fill="#3b9be6" />
        <path d="M18 15q2-3 6-3 7 0 7 6 0 4-4 6.500-3 2-3 5.500" stroke="#fff" strokeWidth="2.800" />
        <circle cx="24" cy="35.500" r="2.400" fill="#fff" />
      </Svg>
    ),
  },
];

const TrashArt = () => (
  <Svg s={48}>
    <rect x="6" y="0" width="36" height="44" rx="4" fill="#c9c9c9" />
    <rect x="9" y="3" width="30" height="6" rx="3" fill="#7b7b7b" />
    <path d="M20.500 25l3.500-5.500 3.500 5.500M30 26l2.500 4.500-2.500 3.500h-4M22 34h-4l-2.500-3.500L18 26" stroke="#2a8a1d" strokeWidth="3.300" />
  </Svg>
);

/* ---------- sheet data ---------- */

const columns = "ABCDEFGHIJKLMNOPQRSTUV".split("");
const quarters = ["Product", "Q1", "Q2", "Q3", "Q4", "Total"];
const data: Record<number, string[]> = {
  1: ["Zone 1"],
  2: quarters,
  3: ["Khewra Salt", "￥4,142.00", "￥4,867.00", "￥3,072.00", "￥2,370.00", "￥14,451.00"],
  4: ["Lahori Paye", "￥2,122.00", "￥2,014.00", "￥3,167.00", "￥3,478.00", "￥10,781.00"],
  5: ["Nihari", "￥3,799.00", "￥1,343.00", "￥4,026.00", "￥1,923.00", "￥11,091.00"],
  6: ["Total", "￥10,063.00"],
  8: ["Zone 2"],
  9: quarters,
  10: ["Chapli Kebab", "￥2,617.00", "￥3,402.00", "￥4,649.00", "￥2,695.00", "￥13,363.00"],
  11: ["Biryani", "￥3,339.00", "￥4,050.00", "￥1,362.00", "￥1,209.00", "￥9,960.00"],
  12: ["Sajji", "￥4,860.00", "￥3,996.00", "￥1,076.00", "￥3,364.00", "￥13,296.00"],
  13: ["Total", "￥10,816.00"],
  15: ["Zone 3"],
  16: quarters,
  17: ["Sohan Halwa", "￥1,117.00", "￥3,339.00", "￥4,486.00", "￥2,233.00", "￥11,175.00"],
  18: ["Nan Khatai", "￥4,843.00", "￥3,319.00", "￥3,793.00", "￥4,575.00", "￥16,530.00"],
  19: ["Gajrela", "￥3,831.00", "￥3,178.00", "￥4,230.00", "￥4,022.00", "￥15,261.00"],
  20: ["Total", "￥9,791.00"],
};
const tall = [3, 4, 5, 6, 10, 11, 12, 13, 17, 18, 19];
const rowHeight = (n: number) => (tall.includes(n) ? 20 : n === 20 ? 19 : 17);
const cutOff = ["Chapli Kebab", "Sohan Halwa"];

const Row = ({ n }: { n: number }) => {
  const values = data[n] ?? [];
  const merged = values.length === 1;
  const rest = columns.concat("").slice(merged ? 6 : 0);
  return (
    <tr>
      <RowHead scope="row" $h={rowHeight(n)} $on={n === 20}>{n}</RowHead>
      {merged && <Cell colSpan={6} $align="center">{values[0]}</Cell>}
      {rest.map((_, i) => {
        const v = merged ? undefined : values[i];
        const money = v?.startsWith("￥");
        const formula = money && n > 9 && (i === 5 || values.length === 2);
        return (
          <Cell key={i} $align={money ? "right" : undefined} $cjk={formula}>
            {v && <Clip>{v}</Clip>}
            {v && cutOff.includes(v) && (
              <MoreMark width="5" height="8" viewBox="0 0 5 8"><path d="M0 0l5 4-5 4z" fill="#000" /></MoreMark>
            )}
            {n === 20 && i === 1 && <Selection />}
            {n === 20 && i === 4 && (
              <Pointer width="18" height="27" viewBox="0 0 18 27">
                <path d="M1.500 1.500v19l4.500-4 3.500 8.500 3.500-1.500-3.500-8h6z" fill="#222" stroke="#fff" strokeWidth="1.300" />
              </Pointer>
            )}
          </Cell>
        );
      })}
    </tr>
  );
};

const InfoIcon = () => (
  <Svg s={30}>
    <circle cx="15" cy="15" r="14.500" fill="#1e82d2" stroke="#2c6c9c" />
    <path d="M1 16h28a14 14 0 01-28 0z" fill="#48a4e4" />
    <circle cx="15" cy="7" r="1.900" fill="#fff" />
    <path d="M12 12.500h3.500V23M12 23.500h7" stroke="#fff" strokeWidth="2.200" />
  </Svg>
);

const Message = ({ text, action }: { text: string; action: string }) => (
  <InfoBar>
    <InfoIcon />
    <InfoText>{text}</InfoText>
    <InfoAction>{action}</InfoAction>
    <InfoClose aria-label="Close message">
      <Svg s={18}><path d="M2 1.500l15 15m0-15l-15 15" stroke="#0a4f94" strokeWidth="2" /></Svg>
    </InfoClose>
  </InfoBar>
);

const menus = ["File", "Edit", "View", "Insert", "Format", "Styles", "Sheet", "Data", "Tools", "Window", "Help"];

export default function App() {
  return (
    <Desktop>
      <Global />
      <TopBar>
        <TopSide>
          <TopButton>Activities</TopButton>
          <AppButton>
            <Svg w={14} h={16}>
              <path d="M1 1h9l3 3v11H1z" fill="#e8e8e8" />
              <path d="M3.500 5.500h7v7h-7zM3.500 8h7M3.500 10.500h7M6 5.500v7M8.500 5.500v7" stroke="#222" />
            </Svg>
            LibreOffice Calc
          </AppButton>
        </TopSide>
        <Clock>
          {"Apr 21  18:17"}
          <Svg w={14} h={16}>
            <path d="M1.500 12.500q2-1.500 2-4.500 0-5 3.500-5t3.500 5q0 3 2 4.500zM1 5q.5-2 2-3.500M13 5q-.5-2-2-3.500M5.500 14.500h3" stroke="#f2f2f2" strokeWidth="1.200" />
          </Svg>
        </Clock>
        <TopSide $end>
          <TopButton aria-label="System menu">
            <Svg w={16} h={16}>
              <path d="M1 5.500h3l4-4v13l-4-4H1z" fill="#f2f2f2" />
              <path d="M10 5.500q1.500 2.500 0 5M12.500 3.500q3 4.500 0 9" stroke="#f2f2f2" strokeWidth="1.300" />
            </Svg>
            <Svg w={14} h={16}>
              <path d="M4 3.500a6 6 0 106 0M7 1v7" stroke="#f2f2f2" strokeWidth="1.300" />
            </Svg>
          </TopButton>
        </TopSide>
      </TopBar>
      <Body>
        <Dock aria-label="Dock">
          {dock.map((d) => (
            <DockItem key={d.label} aria-label={d.label} $active={d.active}>
              {d.active && <RunDot />}
              {d.art}
            </DockItem>
          ))}
          <DockRule />
          <DockItem aria-label="Trash"><TrashArt /></DockItem>
          <DockSpace />
          <DockItem aria-label="Show applications">
            <Svg s={32}>
              {[1, 13, 25].map((y) => [1, 13, 25].map((x) => <rect key={`${x}${y}`} x={x} y={y} width="6" height="6" rx="1.500" fill="#f5f5f5" />))}
            </Svg>
          </DockItem>
        </Dock>
        <Win>
          <TitleBar>
            <Title>Quarterly_Product_Sales_by_Zone.xlsx - LibreOffice Calc</Title>
            <WinButtons>
              <WinButton aria-label="Minimise"><Svg s={10}><path d="M1 7.500h8" stroke="#333" /></Svg></WinButton>
              <WinButton aria-label="Restore"><Svg s={10}><path d="M1.500 3.500h5v5h-5z" stroke="#333" /><path d="M3 1.500h5.500V7" stroke="#888" /></Svg></WinButton>
              <WinButton aria-label="Close"><Svg s={10}><path d="M1.500 1.500l7 7m0-7l-7 7" stroke="#333" strokeWidth="1.300" /></Svg></WinButton>
            </WinButtons>
          </TitleBar>
          <MenuRow>
            <MenuBar>
              {menus.map((m) => <MenuItem key={m}>{m}</MenuItem>)}
            </MenuBar>
            <CloseDoc aria-label="Close document"><Svg s={10}><path d="M1 1l8 8m0-8l-8 8" stroke="#333" strokeWidth="1.300" /></Svg></CloseDoc>
          </MenuRow>
          <Toolbar><Tools items={standard} /></Toolbar>
          <Toolbar $format>
            <Combo $w={221} $drop={35}>
              <ComboInput aria-label="Font name" $italic defaultValue="微软雅黑" />
              <ComboDrop aria-label="Font list"><Chevron /></ComboDrop>
            </Combo>
            <Combo $w={101} $drop={35}>
              <ComboInput aria-label="Font size" defaultValue="10 pt" />
              <ComboDrop aria-label="Font size list"><Chevron /></ComboDrop>
            </Combo>
            <Tools items={formatting} />
          </Toolbar>
          <Work>
            <Doc>
              <FormulaBar>
                <Combo $w={173} $drop={35}>
                  <ComboInput aria-label="Name box" defaultValue="B20:E20" />
                  <ComboDrop aria-label="Named ranges"><Chevron /></ComboDrop>
                </Combo>
                <Divider $w={8} />
                <FormulaTools>
                  <FormulaTool aria-label="Function wizard" $w={14}>
                    <Svg w={14} h={18}>
                      <path d="M8 4H6.500Q4.500 4 4.500 6v9M1.500 8.500h6" stroke="#333" strokeWidth="2" />
                      <path d="M8.500 11l4 4m0-4l-4 4" stroke="#555" />
                    </Svg>
                  </FormulaTool>
                  <FormulaTool aria-label="Select function" $w={28}>
                    <Svg w={14} h={18}>
                      <path d="M12 6V4H3l4.500 5L3 14h9v-2" stroke="#333" strokeWidth="2.200" />
                    </Svg>
                  </FormulaTool>
                  <FormulaTool aria-label="Function list" $w={12}><Arrow /></FormulaTool>
                  <FormulaTool aria-label="Formula" $w={26}>
                    <Svg w={14} h={18}><path d="M1 6h12M1 11h12" stroke="#333" strokeWidth="2" /></Svg>
                  </FormulaTool>
                </FormulaTools>
                <FormulaInput aria-label="Input line" defaultValue="=SUM(B17:B19)" />
                <Expand aria-label="Expand formula bar"><Chevron /></Expand>
              </FormulaBar>
              <Message text="Help us make LibreOffice even better!" action="Get involved" />
              <Message text="Your donations support our worldwide community." action="Donate" />
              <SheetArea>
                <SheetView>
                  <Table>
                    <colgroup>
                      <RowCol />
                      {columns.concat("").map((c, i) => <DataCol key={i} />)}
                    </colgroup>
                    <thead>
                      <tr>
                        <Head />
                        {columns.concat("").map((c, i) => <Head key={i} scope="col" $on={i > 0 && i < 5}>{c}</Head>)}
                      </tr>
                    </thead>
                    <tbody>
                      {Array.from({ length: 40 }, (_, i) => <Row key={i} n={i + 1} />)}
                    </tbody>
                  </Table>
                </SheetView>
                <VScroll>
                  <SplitV />
                  <VThumb />
                </VScroll>
              </SheetArea>
              <HScroll>
                <HThumb />
                <SplitH />
              </HScroll>
              <Tabs>
                <TabNav aria-label="First sheet"><Svg s={16}><path d="M1.500 1v14M4 8h12" stroke="#f4997b" strokeWidth="2" /><path d="M3 8l5-4v8z" fill="#f4997b" /></Svg></TabNav>
                <TabNav aria-label="Previous sheet"><Svg s={16}><path d="M1.500 4v8" stroke="#999" /><path d="M8.500 3.500v9L2 8zM15.500 3.500v9L9 8z" fill="#999" /></Svg></TabNav>
                <TabNav aria-label="Next sheet"><Svg s={16}><path d="M14.500 4v8" stroke="#999" /><path d="M7.500 3.500v9L14 8zM.5 3.500v9L7 8z" fill="#999" /></Svg></TabNav>
                <TabNav aria-label="Last sheet"><Svg s={16}><path d="M14.500 1v14M0 8h12" stroke="#f4997b" strokeWidth="2" /><path d="M13 8L8 4v8z" fill="#f4997b" /></Svg></TabNav>
                <TabNav aria-label="Add sheet" $w={38}>
                  <Svg s={18}>
                    <path d="M2.500 1.500h9l4 4v11h-13z" fill="#fff" stroke={G} />
                    <circle cx="13" cy="13.500" r="4" fill="#15882a" />
                    <path d="M10.500 13.500h5M13 11v5" stroke="#fff" />
                  </Svg>
                </TabNav>
                <Tab>工作表1</Tab>
              </Tabs>
            </Doc>
            <Sidebar>
              <SideButton aria-label="Sidebar settings"><Svg s={12}><path d="M1 1.500h10M1 6h10M1 10.500h10" stroke="#333" /></Svg></SideButton>
              <SideButton aria-label="Properties" $on>
                <Svg>
                  <rect x="4" y="4" width="16" height="7" rx="3.500" fill={accent} />
                  <rect x="4" y="13" width="16" height="7" rx="3.500" fill={accent} />
                  <circle cx="16.500" cy="7.500" r="2.500" fill="#fff" />
                  <circle cx="7.500" cy="16.500" r="2.500" fill="#fff" />
                </Svg>
              </SideButton>
              <SideButton aria-label="Styles">
                <Svg>
                  <Letter t="A" x={17} y={13} size={15} italic />
                  <path d="M2 21l5-5" stroke="#f7937e" strokeWidth="2.500" />
                  <path d="M4 13q-1-5 4-6l2 2-3 4 5 5h3l3-4-7-7-4-1" fill="#fff" stroke={G} />
                </Svg>
              </SideButton>
              <SideButton aria-label="Gallery">
                <Svg>
                  <rect x="2.500" y="3.500" width="16" height="13" rx="1.500" fill="#d65ac8" stroke={G} />
                  <rect x="5.500" y="7.500" width="16" height="13" rx="1.500" fill="#d65ac8" stroke="#222" />
                  <path d="M9 18l3-5 1.500 2 1-1.500L17 18z" fill="#fff" />
                  <circle cx="17" cy="12" r="1.200" fill="#fff" />
                </Svg>
              </SideButton>
              <SideButton aria-label="Navigator">
                <Svg>
                  <circle cx="12" cy="12" r="9.500" fill="#4674e4" stroke={G} />
                  <path d="M7 17l2-5 2.500-2 3 3-2 2.500z" fill="#eee" />
                  <path d="M12 10l4-3-1.500 5z" fill="#e23b3b" />
                </Svg>
              </SideButton>
              <SideButton aria-label="Functions">
                <Svg>
                  <path d="M12 4h-1.500Q8 4 8 7v13M5 9.500h7" stroke="#333" strokeWidth="2" />
                  <path d="M14.500 14.500l6 6m0-6l-6 6" stroke="#333" strokeWidth="2" />
                </Svg>
              </SideButton>
              <SideHandle aria-label="Hide sidebar"><Svg w={7} h={10}><path d="M1 1l5 4-5 4z" fill="#fff" /></Svg></SideHandle>
            </Sidebar>
          </Work>
          <StatusBar>
            <Status $w={234}>Sheet 1 of 1</Status>
            <Status $w={320}>Selected: 1 row, 4 columns</Status>
            <Status $w={278}>PageStyle_工作表1</Status>
            <Status $w={275} $center>English (Hong Kong)</Status>
            <Status $w={68} />
            <Status $w={29} $center>
              <Svg w={18} h={12}>
                <path d="M1.500 3.500h9v6h-9z" stroke={R} />
                <path d="M13 1.500h4M13 10.500h4M15 1.500v9" stroke="#333" />
              </Svg>
            </Status>
            <Status $w={29} $center>
              <Svg w={12} h={12}>
                <path d="M4 1h4v4h2.500L6 10 1.500 5H4z" fill="#9bd14a" stroke={G} />
                <path d="M2 11.500h8" stroke={G} />
                <circle cx="10.500" cy="1.500" r="1.500" fill="#c9213a" />
              </Svg>
            </Status>
            <Status $w={29} />
            <Status $center>Average: ￥9,791.00; Sum: ￥9,791.00</Status>
            <Status $w={143} $center>
              <Svg s={8}><path d="M0 4h8" stroke="#555" strokeWidth="2" /></Svg>
              <ZoomLabel>
                <Hidden>Zoom</Hidden>
                <Range type="range" min={0} max={100} defaultValue={50} />
              </ZoomLabel>
              <Svg s={8}><path d="M0 4h8M4 0v8" stroke="#555" strokeWidth="2" /></Svg>
            </Status>
            <Status $w={49}>100%</Status>
          </StatusBar>
        </Win>
      </Body>
    </Desktop>
  );
}
